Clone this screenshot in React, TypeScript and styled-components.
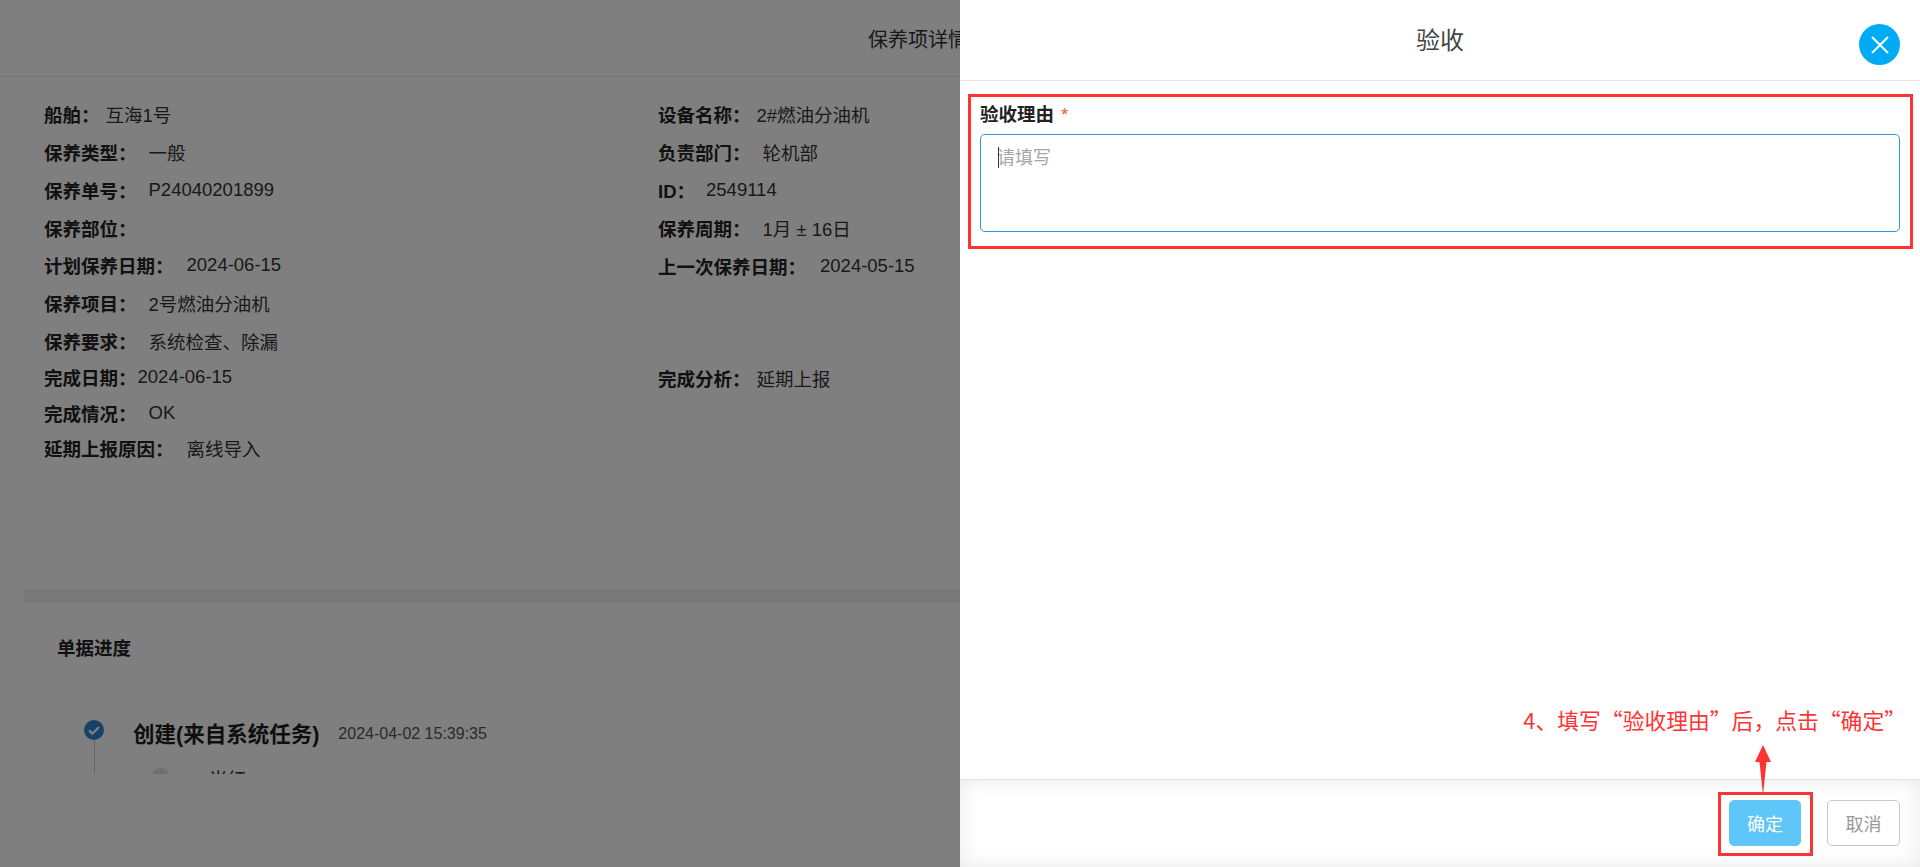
import styled, { createGlobalStyle } from 'styled-components';

const GlobalStyle = createGlobalStyle`
  html, body {
    margin: 0;
    padding: 0;
    height: 100%;
    overflow: hidden;
    background: #fff;
    font-family: "Liberation Sans", "Noto Sans CJK SC", sans-serif;
  }
  * {
    box-sizing: border-box;
  }
`;

const Page = styled.div`
  position: relative;
  width: 1920px;
  height: 867px;
  overflow: hidden;
  background: #fff;
`;

const DetailHeader = styled.header`
  height: 77px;
  display: flex;
  align-items: center;
  justify-content: center;
  padding-right: 84px;
  border-bottom: 1px solid #e4e6ea;
  font-size: 20px;
  color: #333;
`;

const DetailBody = styled.main`
  height: 697px;
  overflow: hidden;
`;

const InfoGrid = styled.section`
  display: grid;
  grid-template-columns: 614px 1fr;
  height: 513px;
  padding: 18px 0 0 44px;
`;

const InfoColumn = styled.div`
  display: flex;
  flex-direction: column;
`;

const InfoRow = styled.div<{ $height?: number; $top?: number }>`
  display: flex;
  align-items: center;
  height: ${(p) => p.$height ?? 38}px;
  margin-top: ${(p) => p.$top ?? 0}px;
  font-size: 18.5px;
  color: #333;
  white-space: nowrap;
`;

const InfoLabel = styled.span<{ $gap: number }>`
  font-weight: 700;
  color: #222;
  margin-right: ${(p) => p.$gap}px;
`;

const Band = styled.div`
  height: 13px;
  margin-left: 24px;
  background: #eef0f4;
`;

const SectionTitle = styled.h2`
  margin: 34px 0 0 57px;
  font-size: 18.5px;
  line-height: 24px;
  font-weight: 700;
  color: #222;
`;

const Timeline = styled.div`
  display: grid;
  grid-template-columns: 20px 1fr;
  column-gap: 29px;
  margin: 59px 0 0 84px;
`;

const Rail = styled.div`
  display: flex;
  flex-direction: column;
  align-items: center;
`;

const RailLine = styled.div`
  width: 1px;
  height: 60px;
  background: #c9ccd1;
`;

const StepHead = styled.div`
  display: flex;
  align-items: center;
  gap: 19px;
  height: 24px;
`;

const StepTitle = styled.span`
  font-size: 21.5px;
  font-weight: 700;
  color: #1d1d1d;
`;

const StepTime = styled.span`
  margin-top: 4px;
  font-size: 16px;
  color: #555;
`;

const Operator = styled.div`
  display: flex;
  align-items: flex-start;
  gap: 30px;
  margin: 22px 0 0 9px;
  font-size: 18.5px;
  line-height: 22px;
  color: #333;
`;

const OperatorName = styled.span`
  margin-top: 3px;
`;

const Avatar = styled.div`
  width: 37px;
  height: 37px;
  border-radius: 50%;
  background: #f8f8f8;
  overflow: hidden;
  color: #e0e0e0;
`;

const Mask = styled.div`
  position: absolute;
  inset: 0;
  background: rgba(0, 0, 0, 0.5);
`;

const Drawer = styled.aside`
  position: absolute;
  top: 0;
  right: 0;
  bottom: 0;
  width: 960px;
  display: flex;
  flex-direction: column;
  background: #fff;
`;

const DrawerHeader = styled.header`
  height: 81px;
  flex: none;
  display: flex;
  align-items: center;
  justify-content: center;
  padding-bottom: 3px;
  border-bottom: 1px solid #e5e5e5;
  font-size: 24px;
  color: #444;
`;

const CloseButton = styled.button`
  position: absolute;
  top: 24px;
  right: 20px;
  width: 41px;
  height: 41px;
  padding: 0;
  display: flex;
  align-items: center;
  justify-content: center;
  border: none;
  border-radius: 50%;
  background: #00aaf5;
  color: #fff;
`;

const DrawerBody = styled.div`
  flex: 1;
  padding: 13px 7px 0 8px;
`;

const Field = styled.div`
  position: relative;
  height: 155px;
  padding: 6px 10px 0 9px;
  border: 3px solid #ff3333;
`;

const FieldLabel = styled.label`
  display: block;
  height: 24px;
  font-size: 18.5px;
  line-height: 24px;
  font-weight: 700;
  color: #222;
`;

const Required = styled.span`
  margin-left: 7px;
  font-weight: 400;
  color: #e8603c;
`;

const Reason = styled.textarea`
  display: block;
  width: 100%;
  height: 98px;
  margin-top: 7px;
  padding: 11px 16px;
  border: 1px solid #2f93e0;
  border-radius: 5px;
  outline: none;
  resize: none;
  font-family: inherit;
  font-size: 18px;
  line-height: 24px;
  &::placeholder {
    color: #a5a5a5;
  }
`;

const Caret = styled.span`
  position: absolute;
  left: 27px;
  top: 50px;
  width: 1px;
  height: 21px;
  background: #333;
`;

const DrawerFooter = styled.footer`
  height: 88px;
  flex: none;
  display: flex;
  align-items: center;
  justify-content: flex-end;
  gap: 26px;
  padding: 0 20px 2px 0;
  border-top: 1px solid #e2e2e2;
  box-shadow: inset 0 0 22px rgba(0, 0, 0, 0.09);
`;

const ActionButton = styled.button<{ $primary?: boolean }>`
  width: ${(p) => (p.$primary ? 72 : 73)}px;
  height: 46px;
  padding: 0;
  border: 1px solid ${(p) => (p.$primary ? '#5ec6f8' : '#c8c8c8')};
  border-radius: 5px;
  background: ${(p) => (p.$primary ? '#5ec6f8' : '#fff')};
  color: ${(p) => (p.$primary ? '#fff' : '#999')};
  font-family: inherit;
  font-size: 18px;
`;

const Highlight = styled.div`
  position: absolute;
  left: 1718px;
  top: 792px;
  width: 95px;
  height: 64px;
  border: 3px solid #ff3333;
`;

const Note = styled.div`
  position: absolute;
  right: 14px;
  top: 704px;
  font-family: "Noto Sans CJK SC", "Liberation Sans", sans-serif;
  font-size: 21.8px;
  line-height: 32px;
  color: #ff3333;
  white-space: nowrap;
`;

const ArrowMark = styled.svg`
  position: absolute;
  left: 1754px;
  top: 744px;
`;

const leftRows: { label: string; value?: string; gap: number; height?: number }[] = [
  { label: '船舶：', value: '互海1号', gap: 6 },
  { label: '保养类型：', value: '一般', gap: 12 },
  { label: '保养单号：', value: 'P24040201899', gap: 12 },
  { label: '保养部位：', gap: 0 },
  { label: '计划保养日期：', value: '2024-06-15', gap: 13, height: 36 },
  { label: '保养项目：', value: '2号燃油分油机', gap: 12, height: 39 },
  { label: '保养要求：', value: '系统检查、除漏', gap: 12 },
  { label: '完成日期：', value: '2024-06-15', gap: 1, height: 34 },
  { label: '完成情况：', value: 'OK', gap: 12, height: 38 },
  { label: '延期上报原因：', value: '离线导入', gap: 13, height: 31 },
];

const rightRows: { label: string; value: string; gap: number }[] = [
  { label: '设备名称：', value: '2#燃油分油机', gap: 6 },
  { label: '负责部门：', value: '轮机部', gap: 12 },
  { label: 'ID：', value: '2549114', gap: 11 },
  { label: '保养周期：', value: '1月 ± 16日', gap: 12 },
  { label: '上一次保养日期：', value: '2024-05-15', gap: 14 },
];

export default function App() {
  return (
    <Page>
      <GlobalStyle />
      <DetailHeader>保养项详情</DetailHeader>
      <DetailBody>
        <InfoGrid>
          <InfoColumn>
            {leftRows.map((row) => (
              <InfoRow key={row.label} $height={row.height}>
                <InfoLabel $gap={row.gap}>{row.label}</InfoLabel>
                {row.value}
              </InfoRow>
            ))}
          </InfoColumn>
          <InfoColumn>
            {rightRows.map((row) => (
              <InfoRow key={row.label}>
                <InfoLabel $gap={row.gap}>{row.label}</InfoLabel>
                {row.value}
              </InfoRow>
            ))}
            <InfoRow $top={74}>
              <InfoLabel $gap={6}>完成分析：</InfoLabel>
              延期上报
            </InfoRow>
          </InfoColumn>
        </InfoGrid>
        <Band />
        <SectionTitle>单据进度</SectionTitle>
        <Timeline>
          <Rail>
            <svg width="20" height="20" viewBox="0 0 20 20">
              <circle cx="10" cy="10" r="10" fill="#2a86d0" />
              <path d="M5 10.400l3.400 3.300L15 7" fill="none" stroke="#fff" strokeWidth="2.200" />
            </svg>
            <RailLine />
          </Rail>
          <div>
            <StepHead>
              <StepTitle>创建(来自系统任务)</StepTitle>
              <StepTime>2024-04-02 15:39:35</StepTime>
            </StepHead>
            <Operator>
              <Avatar>
                <svg width="37" height="37" viewBox="0 0 37 37">
                  <circle cx="18.500" cy="10" r="8" fill="currentColor" />
                  <path d="M5 36c1-9 7-17 13.500-17S31 27 32 36z" fill="currentColor" />
                </svg>
              </Avatar>
              <OperatorName>当红</OperatorName>
            </Operator>
          </div>
        </Timeline>
      </DetailBody>
      <Mask />
      <Drawer>
        <DrawerHeader>验收</DrawerHeader>
        <CloseButton aria-label="关闭">
          <svg width="20" height="20" viewBox="0 0 20 20">
            <path d="M2 2l16 16M18 2L2 18" stroke="currentColor" strokeWidth="2" />
          </svg>
        </CloseButton>
        <DrawerBody>
          <Field>
            <FieldLabel>
              验收理由<Required>*</Required>
            </FieldLabel>
            <Reason placeholder="请填写" />
            <Caret />
          </Field>
        </DrawerBody>
        <DrawerFooter>
          <ActionButton $primary>确定</ActionButton>
          <ActionButton>取消</ActionButton>
        </DrawerFooter>
      </Drawer>
      <Note>4、填写“验收理由”后，点击“确定”</Note>
      <ArrowMark width="18" height="52" viewBox="0 0 18 52">
        <path d="M9 1L17 18H12.500L9 51L5.500 18H1z" fill="#ff3333" />
      </ArrowMark>
      <Highlight />
    </Page>
  );
}
